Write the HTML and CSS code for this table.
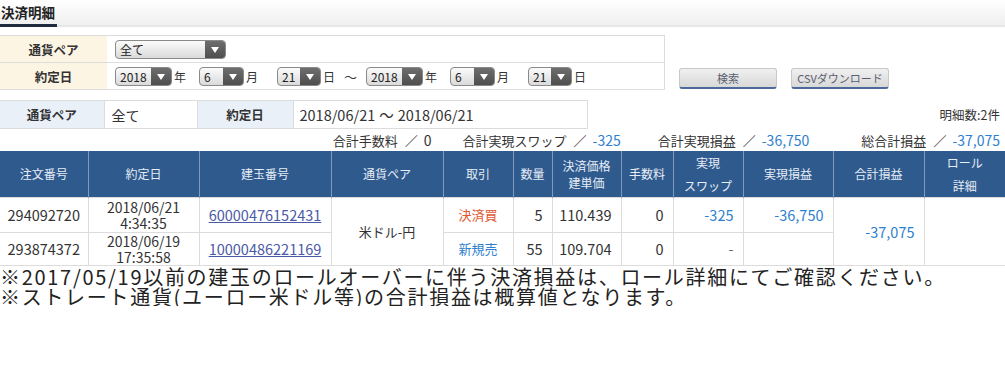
FILE: index.html
```html
<!DOCTYPE html>
<html lang="ja">
<head>
<meta charset="utf-8">
<title>決済明細</title>
<link rel="stylesheet" href="styles.css">
</head>
<body>
<div class="page-head">
  <h1 class="page-title">決済明細</h1>
</div>

<div class="search">
  <table class="form">
    <tr>
      <th>通貨ペア</th>
      <td>
        <div class="ctrls">
          <span class="sel sel-wide"><span class="sel-val">全て</span><span class="sel-arrow"></span></span>
        </div>
      </td>
    </tr>
    <tr>
      <th>約定日</th>
      <td>
        <div class="ctrls">
          <span class="sel sel-y"><span class="sel-val">2018</span><span class="sel-arrow"></span></span><span class="unit u-y">年</span>
          <span class="sel sel-m"><span class="sel-val">6</span><span class="sel-arrow"></span></span><span class="unit u-m">月</span>
          <span class="sel sel-d"><span class="sel-val">21</span><span class="sel-arrow"></span></span><span class="unit u-d">日</span>
          <span class="tilde">～</span>
          <span class="sel sel-y"><span class="sel-val">2018</span><span class="sel-arrow"></span></span><span class="unit u-y">年</span>
          <span class="sel sel-m"><span class="sel-val">6</span><span class="sel-arrow"></span></span><span class="unit u-m">月</span>
          <span class="sel sel-d"><span class="sel-val">21</span><span class="sel-arrow"></span></span><span class="unit u-d">日</span>
        </div>
      </td>
    </tr>
  </table>
  <div class="buttons">
    <button class="btn">検索</button>
    <button class="btn">CSVダウンロード</button>
  </div>
</div>

<div class="summary-row">
  <table class="summary">
    <tr>
      <th class="s-l1">通貨ペア</th>
      <td class="s-v1">全て</td>
      <th class="s-l2">約定日</th>
      <td class="s-v2">2018/06/21<span class="s-tilde">～</span>2018/06/21</td>
    </tr>
  </table>
  <div class="count">明細数:2件</div>
</div>

<div class="totals">
  <span class="tot t1">合計手数料<span class="slash">／</span><b class="zero">0</b></span>
  <span class="tot t2">合計実現スワップ<span class="slash">／</span><b>-325</b></span>
  <span class="tot t3">合計実現損益<span class="slash">／</span><b>-36,750</b></span>
  <span class="tot t4">総合計損益<span class="slash">／</span><b>-37,075</b></span>
</div>

<table class="list">
  <colgroup>
    <col style="width:88px"><col style="width:111px"><col style="width:132px"><col style="width:112px">
    <col style="width:70px"><col style="width:39px"><col style="width:69px"><col style="width:52px">
    <col style="width:70px"><col style="width:90px"><col style="width:91px"><col style="width:81px">
  </colgroup>
  <thead>
    <tr>
      <th>注文番号</th><th>約定日</th><th>建玉番号</th><th>通貨ペア</th><th>取引</th><th>数量</th>
      <th class="tight">決済価格<br>建単価</th><th>手数料</th><th class="loose">実現<br>スワップ</th><th>実現損益</th><th>合計損益</th><th class="loose">ロール<br>詳細</th>
    </tr>
  </thead>
  <tbody>
    <tr class="r1">
      <td class="c num">294092720</td>
      <td class="c num dt">2018/06/21<br>4:34:35</td>
      <td class="c num"><a href="#">60000476152431</a></td>
      <td class="c jp" rowspan="2">米ドル-円</td>
      <td class="c jp buy">決済買</td>
      <td class="r num">5</td>
      <td class="r num">110.439</td>
      <td class="r num">0</td>
      <td class="r num blue">-325</td>
      <td class="r num blue">-36,750</td>
      <td class="r num blue" rowspan="2">-37,075</td>
      <td rowspan="2"></td>
    </tr>
    <tr class="r2">
      <td class="c num">293874372</td>
      <td class="c num dt">2018/06/19<br>17:35:58</td>
      <td class="c num"><a href="#">10000486221169</a></td>
      <td class="c jp sell">新規売</td>
      <td class="r num">55</td>
      <td class="r num">109.704</td>
      <td class="r num">0</td>
      <td class="r num dash">-</td>
      <td class="r"></td>
    </tr>
  </tbody>
</table>

<p class="notes">※2017/05/19以前の建玉のロールオーバーに伴う決済損益は、ロール詳細にてご確認ください。<br>※ストレート通貨(ユーロー米ドル等)の合計損益は概算値となります。</p>
</body>
</html>
```

FILE: styles.css
```css
* { box-sizing: border-box; }
html, body {
  margin: 0;
  padding: 0;
  background: #fff;
  font-family: "Noto Sans CJK JP", "Noto Sans", sans-serif;
  color: #333;
  font-size: 12px;
}

.page-head {
  height: 27px;
  background: linear-gradient(#ffffff, #efefef);
  border-bottom: 2px solid #e6e6e6;
  display: flex;
  align-items: flex-end;
}
.page-title {
  margin: 0 0 -2px 0;
  padding: 0 2px 2px 1px;
  font-size: 13.5px;
  font-weight: bold;
  color: #222;
  line-height: 20px;
  border-bottom: 3px solid #1f2c3f;
}

.search {
  display: flex;
  align-items: flex-end;
  margin-top: 8px;
}
.form {
  width: 665px;
  border-collapse: collapse;
}
.form th, .form td {
  height: 27px;
  border-top: 1px solid #dcdcdc;
  border-bottom: 1px solid #dcdcdc;
  padding: 0;
}
.form td { border-right: 1px solid #dcdcdc; padding-left: 8px; }
.form th {
  width: 107px;
  background: #fdf5e4;
  font-weight: bold;
  color: #333;
  font-size: 12.5px;
  text-align: center;
}
.ctrls {
  display: flex;
  align-items: center;
  white-space: nowrap;
}

.sel {
  display: inline-flex;
  align-items: stretch;
  height: 19px;
  border: 1px solid #8a8a8a;
  border-radius: 4px;
  background: linear-gradient(#fbfbfb, #dadada);
  overflow: hidden;
}
.sel-val {
  flex: 1;
  font-size: 12px;
  line-height: 17px;
  padding-left: 4px;
  color: #222;
}
.sel-arrow {
  width: 20px;
  background: linear-gradient(#6e6e6e, #4e4e4e);
  position: relative;
}
.sel-arrow::after {
  content: "";
  position: absolute;
  left: 6px;
  top: 6px;
  border-left: 4px solid transparent;
  border-right: 4px solid transparent;
  border-top: 6px solid #fff;
}
.sel-wide { width: 111px; }
.sel-y { width: 57px; }
.sel-m { width: 45px; }
.sel-d { width: 44px; }
.unit {
  font-size: 12px;
  margin-left: 2px;
  width: 12px;
}
.u-y { margin-right: 13px; }
.u-m { margin-right: 19px; }
.u-d { margin-right: 9px; }
.tilde {
  font-size: 13px;
  width: 14px;
  margin-right: 8px;
}

.buttons {
  display: flex;
  gap: 14px;
  margin-left: 14px;
  padding-bottom: 1px;
}
.btn {
  width: 98px;
  height: 21px;
  padding: 0;
  border: 1px solid #c8c8c8;
  border-bottom: 2px solid #4a6a9a;
  border-radius: 3px;
  background: linear-gradient(#f0f0f0, #d8d8d8);
  color: #5a6070;
  font-family: inherit;
  font-size: 11px;
  line-height: 17px;
}

.summary-row {
  display: flex;
  align-items: center;
  margin-top: 10px;
}
.summary {
  border-collapse: collapse;
  width: 588px;
}
.summary th, .summary td {
  height: 28px;
  border: 1px solid #dcdcdc;
  padding: 0;
}
.summary th {
  background: #e9f0f8;
  font-weight: bold;
  font-size: 12.5px;
  color: #333;
  text-align: center;
}
.summary td { font-size: 14px; color: #333; }
.s-l1 { width: 104px; border-left: none !important; }
.summary .s-v1 { width: 93px; padding-left: 7px; }
.s-l2 { width: 96px; }
.summary .s-v2 { padding-left: 6px; font-size: 14.5px; }
.s-tilde { margin: 0 4px; }
.count {
  margin-left: auto;
  padding-right: 5px;
  font-size: 12.5px;
  color: #333;
}

.totals {
  display: flex;
  justify-content: flex-end;
  padding-right: 5px;
  height: 22px;
  align-items: center;
  font-size: 13px;
  color: #333;
  white-space: nowrap;
}
.slash { margin: 0 6px 0 7px; }
.tot b { font-weight: normal; color: #2f7fd0; font-size: 14px; }
.tot b.zero { color: #333; }
.t2 { margin-left: 31px; }
.t3 { margin-left: 37px; }
.t4 { margin-left: 52px; }

.list {
  border-collapse: collapse;
  table-layout: fixed;
  width: 1005px;
}
.list th {
  height: 45px;
  background: #2f5a8e;
  color: #e6edf5;
  font-weight: normal;
  font-size: 12px;
  line-height: 18px;
  border-left: 1px solid #7f9abd;
  padding: 0;
}
.list th.tight { line-height: 17px; }
.list th.loose { line-height: 23px; }
.list th:first-child { border-left: none; }
.list td {
  border: 1px solid #dcdcdc;
  line-height: 16px;
  padding: 0;
  color: #333;
}
.list td.num { font-size: 14.5px; }
.list td.jp { font-size: 13px; }
.list td:first-child { border-left: none; }
.list tr.r1 td { height: 35px; }
.list tr.r2 td { height: 33px; }
.list td.c { text-align: center; }
.list td.r { text-align: right; padding-right: 9px; }
.list td.dt { font-size: 14px; line-height: 16px; }
.list a { color: #4b5aa6; text-decoration: underline; }
.list .buy { color: #e2582f; }
.list .sell { color: #2f7fd0; }
.list .blue { color: #2f7fd0; }
.list .dash { color: #666; }

.notes {
  margin: 0;
  font-size: 20px;
  letter-spacing: 1.7px;
  line-height: 19.5px;
  color: #222;
  padding-top: 1px;
  white-space: nowrap;
}
```
